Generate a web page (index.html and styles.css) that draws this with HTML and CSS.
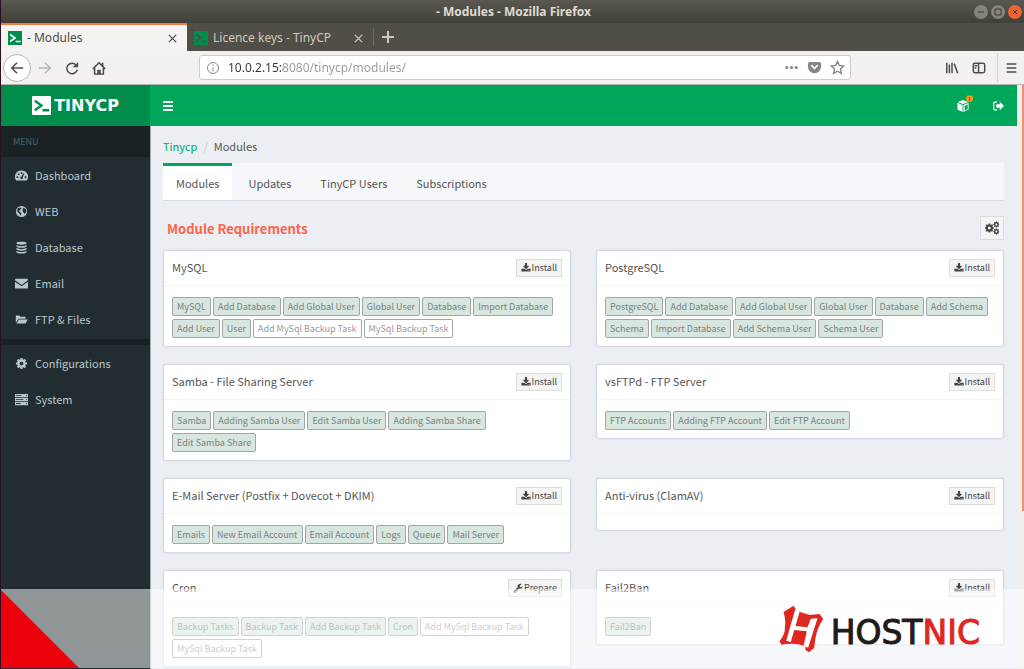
FILE: index.html
```html
<!DOCTYPE html>
<html lang="en">
<head>
    <meta charset="UTF-8">
    <meta name="viewport" content="width=device-width, initial-scale=1.0">
    <title>- Modules</title>
    <link rel="stylesheet" href="styles.css">
</head>
<body>
    <!-- Icon set -->
    <svg class="sprite" aria-hidden="true">
        <symbol id="i-install" viewBox="0 0 1792 1792"><path d="M1344 1344q0-26-19-45t-45-19-45 19-19 45 19 45 45 19 45-19 19-45zm256 0q0-26-19-45t-45-19-45 19-19 45 19 45 45 19 45-19 19-45zm128-224v320q0 40-28 68t-68 28h-1472q-40 0-68-28t-28-68v-320q0-40 28-68t68-28h465l135 136q58 56 136 56t136-56l136-136h464q40 0 68 28t28 68zm-325-569q17 41-14 70l-448 448q-18 19-45 19t-45-19l-448-448q-31-29-14-70 17-39 59-39h256v-448q0-26 19-45t45-19h256q26 0 45 19t19 45v448h256q42 0 59 39z"/></symbol>
        <symbol id="i-cog" viewBox="0 0 1792 1792"><path d="M1152 896q0-106-75-181t-181-75-181 75-75 181 75 181 181 75 181-75 75-181zm512-109v222q0 12-8 23t-20 13l-185 28q-19 54-39 91 35 50 107 138 10 12 10 25t-9 23q-27 37-99 108t-94 71q-12 0-26-9l-138-108q-44 23-91 38-16 136-29 186-7 28-36 28h-222q-14 0-24.5-8.5t-11.5-21.5l-28-184q-49-16-90-37l-141 107q-10 9-25 9-14 0-25-11-126-114-165-168-7-10-7-23 0-12 8-23 15-21 51-66.5t54-70.5q-27-50-41-99l-183-27q-13-2-21-12.5t-8-23.5v-222q0-12 8-23t19-13l186-28q14-46 39-92-40-57-107-138-10-12-10-24 0-10 9-23 26-36 98.5-107.5t94.5-71.5q13 0 26 10l138 107q44-23 91-38 16-136 29-186 7-28 36-28h222q14 0 24.5 8.5t11.5 21.5l28 184q49 16 90 37l142-107q9-9 24-9 13 0 25 10 129 119 165 170 7 8 7 22 0 12-8 23-15 21-51 66.5t-54 70.5q26 50 41 98l183 28q13 2 21 12.5t8 23.5z"/></symbol>
        <symbol id="i-wrench" viewBox="0 0 1792 1792"><path d="M448 1472q0-26-19-45t-45-19-45 19-19 45 19 45 45 19 45-19 19-45zm644-420l-682 682q-37 37-90 37-52 0-91-37l-106-108q-38-36-38-90 0-53 38-91l681-681q39 98 114.5 173.5t173.5 114.5zm634-435q0 39-23 106-47 134-164.5 217.5t-258.5 83.5q-185 0-316.5-131.5t-131.5-316.5 131.5-316.5 316.5-131.5q58 0 121.5 16.5t107.5 46.5q16 11 16 28t-16 28l-293 169v224l193 107q5-3 79-48.5t135.5-81 70.5-35.5q15 0 23.5 10t8.5 25z"/></symbol>
        <symbol id="i-terminal" viewBox="0 0 20 20"><path d="M3 5l7 5-7 5M11 15h7" fill="none" stroke-width="2.4"/></symbol>
        <symbol id="i-close" viewBox="0 0 10 10"><path d="M1 1l8 8M9 1l-8 8" fill="none" stroke="currentColor" stroke-width="1.4"/></symbol>
    </svg>

    <!-- Browser window -->
    <div class="titlebar">
        <div class="title">- Modules - Mozilla Firefox</div>
        <div class="window-buttons">
            <button class="win-btn" aria-label="Minimize"><svg viewBox="0 0 14 14"><path d="M4 7h6"/></svg></button>
            <button class="win-btn" aria-label="Maximize"><svg viewBox="0 0 14 14"><path d="M4 4h6v6H4z"/></svg></button>
            <button class="win-btn win-close" aria-label="Close"><svg viewBox="0 0 14 14"><path d="M5 5l4 4M9 5l-4 4"/></svg></button>
        </div>
    </div>

    <div class="browser-tabs">
        <div class="browser-tab active">
            <svg class="favicon"><use href="#i-terminal"/></svg>
            <span>- Modules</span>
            <button class="tab-close" aria-label="Close tab"><svg><use href="#i-close"/></svg></button>
        </div>
        <div class="browser-tab">
            <svg class="favicon"><use href="#i-terminal"/></svg>
            <span>Licence keys - TinyCP</span>
            <button class="tab-close" aria-label="Close tab"><svg><use href="#i-close"/></svg></button>
        </div>
        <button class="new-tab" aria-label="New tab"><svg viewBox="0 0 12 12"><path d="M6 0v12M0 6h12"/></svg></button>
    </div>

    <div class="toolbar">
        <div class="nav-buttons">
            <button class="tool back" aria-label="Back"><svg viewBox="0 0 16 16"><path d="M15 8H2M8 2L2 8l6 6"/></svg></button>
            <button class="tool forward" aria-label="Forward"><svg viewBox="0 0 16 16"><path d="M1 8h13M8 2l6 6-6 6"/></svg></button>
            <button class="tool" aria-label="Reload"><svg viewBox="0 0 16 16"><path d="M13 5A6 6 0 1 0 14 10"/><path class="solid" d="M15 1v6H9z"/></svg></button>
            <button class="tool" aria-label="Home"><svg viewBox="0 0 16 16"><path d="M1 9l7-7 7 7M3 8v7h10V8"/><path class="solid" d="M6 15v-5h4v5zM11 2h2v4h-2z"/></svg></button>
        </div>
        <div class="urlbar">
            <svg class="info" viewBox="0 0 14 14"><circle cx="7" cy="7" r="5.5"/><path d="M7 6.5v4M7 3.5V5"/></svg>
            <input class="url" type="text" value="10.0.2.15:8080/tinycp/modules/" aria-label="Address">
            <button class="url-btn" aria-label="Page actions"><svg viewBox="0 0 16 16"><circle cx="3" cy="8" r="1.7"/><circle cx="8" cy="8" r="1.7"/><circle cx="13" cy="8" r="1.7"/></svg></button>
            <button class="url-btn" aria-label="Save to Pocket"><svg viewBox="0 0 16 16"><path d="M3 2h10q2 0 2 2v3a7 7 0 0 1-14 0V4q0-2 2-2z"/><path d="M5 6l3 3 3-3" fill="none" stroke="#fff" stroke-width="1.8" stroke-linecap="round"/></svg></button>
            <button class="url-btn" aria-label="Bookmark"><svg viewBox="0 0 16 16"><path d="M8 1.5l2 4.3 4.7.6-3.5 3.2.9 4.7L8 12l-4.1 2.3.9-4.7-3.5-3.2L6 5.8z" fill="none" stroke="currentColor" stroke-width="1.5"/></svg></button>
        </div>
        <div class="tools-right">
            <button class="tool" aria-label="Library"><svg viewBox="0 0 16 16"><path d="M2 2v12M5 4v10M8 2v12M10.5 3l4 11"/></svg></button>
            <button class="tool" aria-label="Sidebars"><svg viewBox="0 0 16 16"><rect x="1.5" y="2.5" width="13" height="11" rx="2"/><path d="M7.5 3v10"/><path d="M3 5.5h3M3 8h2"/></svg></button>
            <button class="tool menu" aria-label="Menu"><svg viewBox="0 0 16 16"><path d="M3 3.5h11M3 8h11M3 12.5h11"/></svg></button>
        </div>
    </div>

    <!-- TinyCP page -->
    <div class="viewport">
        <div class="page">
            <header class="header">
                <a class="logo" href="#">
                    <svg class="logo-icon"><use href="#i-terminal"/></svg>
                    <span>TINYCP</span>
                </a>
                <nav class="topnav">
                    <button class="top-btn" aria-label="Toggle navigation"><svg viewBox="0 0 12 12"><path d="M1 1h10v2H1zM1 5h10v2H1zM1 9h10v2H1z"/></svg></button>
                    <div class="top-right">
                        <a class="top-btn" href="#" aria-label="Updates available">
                            <svg viewBox="0 0 14 14"><path d="M7 0l6 2.2-6 2.6-6-2.6zM.5 3.2l6 2.6V14l-6-3z"/><path fill-rule="evenodd" d="M13.5 3.2l-6 2.6V14l6-3zM12.5 5v5.5l-3.5 2V7z"/></svg>
                            <span class="badge">i</span>
                        </a>
                        <a class="top-btn" href="#" aria-label="Sign out"><svg viewBox="0 0 14 14"><path d="M6 2.5H3.5Q2 2.5 2 4v6q0 1.5 1.5 1.5H6" fill="none" stroke="#fff" stroke-width="1.3"/><path d="M5 5h4V2l5 5-5 5V9H5z"/></svg></a>
                    </div>
                </nav>
            </header>

            <div class="layout">
                <aside class="sidebar">
                    <div class="menu-header">MENU</div>
                    <ul class="menu-list">
                        <li><a href="#"><svg viewBox="0 0 16 14"><path fill-rule="evenodd" d="M8 1a8 7.5 0 0 0-6.5 12h13A8 7.5 0 0 0 8 1zM7 3h2v2H7zM3.5 4.5h2v2h-2zM2 8h2v2H2zM12 8h2v2h-2zM10 4.5l1.5.4-2 4.2q1 2-1.500 2.300-2.200-.5-1.300-2.600l1.500-.5z"/></svg><span>Dashboard</span></a></li>
                        <li><a href="#"><svg viewBox="0 0 14 14"><path fill-rule="evenodd" d="M7 1a6 6 0 1 0 0 12A6 6 0 0 0 7 1zM3 3.5l3-.9 1 1.2-2 1.6-.4 1.8 2.3 1.4-1 3-1.7-3-1.9-2zM9 3l2.8 1.6.4 2.8-1.6 2.4-1.7-2L8 5.5z"/></svg><span>WEB</span></a></li>
                        <li><a href="#"><svg viewBox="0 0 14 14"><path d="M1.5 2.5c0-2.1 11-2.1 11 0s-11 2.1-11 0zM1.5 4.5q5.5 2.5 11 0v1.3q-1 1.5-5.5 1.5T1.5 5.8zM1.5 7.6q5.5 2.5 11 0v1.3q-1 1.5-5.5 1.5T1.5 8.9zM1.5 10.7q5.5 2.5 11 0V12q-1 1.5-5.5 1.5T1.5 12z"/></svg><span>Database</span></a></li>
                        <li><a href="#"><svg viewBox="0 0 14 14"><path d="M1 2h12q1 0 1 1.5l-7 5-7-5Q0 2 1 2zM0 5l7 5 7-5v6.5q0 1-1 1H1q-1 0-1-1z"/></svg><span>Email</span></a></li>
                        <li><a href="#"><svg viewBox="0 0 16 14"><path d="M1 2h4.5l1 1.5H12q1 0 1 1V6H4.5L1 11zM5 7h10.8L13 12H1.8z"/></svg><span>FTP &amp; Files</span></a></li>
                    </ul>
                    <ul class="menu-list second">
                        <li><a href="#"><svg><use href="#i-cog"/></svg><span>Configurations</span></a></li>
                        <li><a href="#"><svg viewBox="0 0 14 14"><path fill-rule="evenodd" d="M0 1h14v3.500H0zM0 5.300h14v3.500H0zM0 9.600h14v3.500H0zM1 2.300v1h6v-1zM1 6.600v1h8v-1zM1 10.900v1h5v-1zM12 2.300v1h1v-1zM12 6.600v1h1v-1zM12 10.900v1h1v-1z"/></svg><span>System</span></a></li>
                    </ul>
                </aside>

                <main class="content">
                    <div class="breadcrumb"><a href="#">Tinycp</a><span class="sep">/</span><span>Modules</span></div>

                    <nav class="tabs">
                        <a class="tab active" href="#">Modules</a>
                        <a class="tab" href="#">Updates</a>
                        <a class="tab" href="#">TinyCP Users</a>
                        <a class="tab" href="#">Subscriptions</a>
                    </nav>

                    <div class="section-head">
                        <h1>Module Requirements</h1>
                        <button class="btn btn-settings" aria-label="Settings"><svg viewBox="0 0 16 14"><use href="#i-cog" x="-1" y="1" width="12" height="12"/><use href="#i-cog" x="9" y="-1" width="8" height="8"/><use href="#i-cog" x="9" y="7" width="8" height="8"/></svg></button>
                    </div>

                    <div class="modules">
                        <section class="card">
                            <div class="card-head"><h2>MySQL</h2><button class="btn"><svg><use href="#i-install"/></svg>Install</button></div>
                            <div class="card-body">
                                <span class="tag">MySQL</span>
                                <span class="tag">Add Database</span>
                                <span class="tag">Add Global User</span>
                                <span class="tag">Global User</span>
                                <span class="tag">Database</span>
                                <span class="tag">Import Database</span>
                                <span class="tag">Add User</span>
                                <span class="tag">User</span>
                                <span class="tag off">Add MySql Backup Task</span>
                                <span class="tag off">MySql Backup Task</span>
                            </div>
                        </section>

                        <section class="card">
                            <div class="card-head"><h2>PostgreSQL</h2><button class="btn"><svg><use href="#i-install"/></svg>Install</button></div>
                            <div class="card-body">
                                <span class="tag">PostgreSQL</span>
                                <span class="tag">Add Database</span>
                                <span class="tag">Add Global User</span>
                                <span class="tag">Global User</span>
                                <span class="tag">Database</span>
                                <span class="tag">Add Schema</span>
                                <span class="tag">Schema</span>
                                <span class="tag">Import Database</span>
                                <span class="tag">Add Schema User</span>
                                <span class="tag">Schema User</span>
                            </div>
                        </section>

                        <section class="card">
                            <div class="card-head"><h2>Samba - File Sharing Server</h2><button class="btn"><svg><use href="#i-install"/></svg>Install</button></div>
                            <div class="card-body">
                                <span class="tag">Samba</span>
                                <span class="tag">Adding Samba User</span>
                                <span class="tag">Edit Samba User</span>
                                <span class="tag">Adding Samba Share</span>
                                <span class="tag">Edit Samba Share</span>
                            </div>
                        </section>

                        <section class="card">
                            <div class="card-head"><h2>vsFTPd - FTP Server</h2><button class="btn"><svg><use href="#i-install"/></svg>Install</button></div>
                            <div class="card-body">
                                <span class="tag">FTP Accounts</span>
                                <span class="tag">Adding FTP Account</span>
                                <span class="tag">Edit FTP Account</span>
                            </div>
                        </section>

                        <section class="card">
                            <div class="card-head"><h2>E-Mail Server (Postfix + Dovecot + DKIM)</h2><button class="btn"><svg><use href="#i-install"/></svg>Install</button></div>
                            <div class="card-body">
                                <span class="tag">Emails</span>
                                <span class="tag">New Email Account</span>
                                <span class="tag">Email Account</span>
                                <span class="tag">Logs</span>
                                <span class="tag">Queue</span>
                                <span class="tag">Mail Server</span>
                            </div>
                        </section>

                        <section class="card">
                            <div class="card-head"><h2>Anti-virus (ClamAV)</h2><button class="btn"><svg><use href="#i-install"/></svg>Install</button></div>
                            <div class="card-body"></div>
                        </section>

                        <section class="card">
                            <div class="card-head"><h2>Cron</h2><button class="btn"><svg><use href="#i-wrench"/></svg>Prepare</button></div>
                            <div class="card-body">
                                <span class="tag">Backup Tasks</span>
                                <span class="tag">Backup Task</span>
                                <span class="tag">Add Backup Task</span>
                                <span class="tag">Cron</span>
                                <span class="tag off">Add MySql Backup Task</span>
                                <span class="tag off">MySql Backup Task</span>
                            </div>
                        </section>

                        <section class="card">
                            <div class="card-head"><h2>Fail2Ban</h2><button class="btn"><svg><use href="#i-install"/></svg>Install</button></div>
                            <div class="card-body">
                                <span class="tag">Fail2Ban</span>
                            </div>
                        </section>
                    </div>
                </main>
            </div>
        </div>
        <div class="scrollbar"><div class="thumb"></div></div>
    </div>

    <!-- Hostnic banner -->
    <div class="banner">
        <div class="corner"></div>
        <div class="hostnic">
            <svg viewBox="10 10 140 150">
                <path d="M26 34L56 15l6 9-2 10 16 0 28 9 30-3 11 14Q126 84 122 112l-4 30-16 13-10-7v-10Q70 126 34 130l-14 2-6-10Q32 100 30 80 34 60 26 34z"/>
                <path d="M60 30l14 5-12 41 36 4 10-26 20-1-28 88-14-5 10-44-38-4-10 36-14-4z" fill="#fff"/>
            </svg>
            <span>HOST<b>NIC</b></span>
        </div>
    </div>
</body>
</html>
```
FILE: styles.css
```css
* {
    box-sizing: border-box;
}

body {
    display: flex;
    flex-direction: column;
    position: relative;
    height: 100vh;
    margin: 0;
    border-left: 1px solid #2b1020;
    overflow: hidden;
    background: #ebeff4;
    color: #555;
    font-family: "Noto Sans CJK SC", "Noto Sans", sans-serif;
    font-size: 11px;
    line-height: 16px;
}

button {
    padding: 0;
    border: none;
    background: none;
    color: inherit;
    font: inherit;
    cursor: pointer;
}

a {
    color: inherit;
    text-decoration: none;
}

svg {
    display: block;
    flex: none;
    fill: currentColor;
}

.sprite {
    position: absolute;
    width: 0;
    height: 0;
}

/* Browser window */
.titlebar,
.browser-tabs,
.toolbar {
    display: flex;
    flex: none;
    align-items: center;
    font-family: "Noto Sans", sans-serif;
}

.titlebar {
    height: 23px;
    background: linear-gradient(#5a5850, #403f3a);
    color: #dfdbd2;
}

.title {
    flex: 1;
    padding-left: 52px;
    font-size: 12px;
    font-weight: bold;
    text-align: center;
}

.window-buttons {
    display: flex;
    gap: 3px;
    padding-right: 2px;
}

.win-btn {
    width: 14px;
    height: 14px;
    border-radius: 50%;
    background: #85837c;
    color: #3c3b37;
}

.win-btn path {
    fill: none;
    stroke: currentColor;
}

.win-close {
    background: #ee6234;
}

.browser-tabs {
    height: 28px;
    background: #504e47;
    color: #cfcabf;
    font-size: 12px;
}

.browser-tab {
    display: flex;
    align-items: center;
    width: 186px;
    height: 28px;
    padding: 0 10px 0 7px;
    border-top: 2px solid transparent;
}

.browser-tab.active {
    border-top-color: #f07746;
    background: #f4f3f2;
    color: #4c4c4c;
}

.favicon {
    width: 14px;
    height: 14px;
    margin-right: 5px;
    background: #008d4c;
    stroke: #fff;
}

.browser-tab:not(.active) .favicon {
    stroke: #504e47;
}

.tab-close {
    width: 9px;
    height: 9px;
    margin-left: auto;
}

.tab-close svg {
    width: 9px;
    height: 9px;
}

.new-tab {
    padding: 3px 8px;
    border-left: 1px solid #6d6b64;
}

.new-tab svg {
    width: 12px;
    height: 12px;
    stroke: currentColor;
    stroke-width: 2;
}

.toolbar {
    justify-content: space-between;
    height: 34px;
    border-bottom: 1px solid #b5b4b2;
    background: #f2f1f0;
    color: #4c4c4c;
}

.nav-buttons,
.tools-right {
    display: flex;
    align-items: center;
}

.nav-buttons {
    width: 198px;
    padding-left: 2px;
}

.tool {
    display: flex;
    align-items: center;
    justify-content: center;
    width: 27px;
    height: 28px;
}

.tool svg {
    width: 14px;
    height: 14px;
    fill: none;
    stroke: currentColor;
    stroke-width: 1.7;
}

.tool .solid {
    fill: currentColor;
    stroke: none;
}

.back {
    width: 28px;
    border: 1px solid #b8b6b3;
    border-radius: 50%;
    background: #fff;
}

.forward {
    color: #b5b4b2;
}

.urlbar {
    display: flex;
    flex: 1;
    align-items: center;
    gap: 8px;
    max-width: 652px;
    height: 25px;
    padding: 0 5px 0 6px;
    border: 1px solid #ccc;
    border-radius: 3px;
    background: #fff;
    color: #858585;
}

.info {
    width: 14px;
    height: 14px;
    fill: none;
    stroke: currentColor;
}

/* host part is darker than the path */
.url {
    flex: 1;
    min-width: 0;
    padding: 0;
    border: none;
    outline: none;
    background: linear-gradient(to right, #333 55px, #999 55px);
    -webkit-background-clip: text;
    background-clip: text;
    color: transparent;
    font-family: "Noto Sans", sans-serif;
    font-size: 12px;
}

.url-btn svg {
    width: 15px;
    height: 15px;
}

.tools-right {
    margin-left: auto;
}

.menu {
    margin-left: 5px;
    border-left: 1px solid #d5d3d1;
}

/* Page */
.viewport {
    display: flex;
    flex: 1;
    min-height: 0;
}

.page {
    display: flex;
    flex: 1;
    flex-direction: column;
    min-width: 0;
}

.scrollbar {
    width: 7px;
    padding-left: 5px;
    background: #f1efee;
}

.thumb {
    height: 73%;
    background: #ee9374;
}

.header {
    display: flex;
    flex: none;
    height: 41px;
    background: #00a65a;
    color: #fff;
}

.logo {
    display: flex;
    align-items: center;
    justify-content: center;
    gap: 3px;
    width: 149px;
    background: #008d4c;
    font-family: "DejaVu Sans", sans-serif;
    font-size: 16px;
    font-weight: bold;
}

.logo-icon {
    width: 19px;
    height: 19px;
    border-radius: 1px;
    background: #fff;
    stroke: #008d4c;
}

.topnav {
    display: flex;
    flex: 1;
    align-items: center;
    justify-content: space-between;
    padding: 0 13px 0 12px;
}

.top-right {
    display: flex;
    gap: 23px;
}

.top-btn {
    position: relative;
}

.top-btn svg {
    width: 12px;
    height: 12px;
}

.badge {
    position: absolute;
    top: -5px;
    right: -4px;
    width: 7px;
    height: 7px;
    border-radius: 50%;
    background: #f39c12;
    color: #7a4b00;
    font-size: 6px;
    font-weight: bold;
    line-height: 7px;
    text-align: center;
}

.layout {
    display: flex;
    flex: 1;
    min-height: 0;
}

.sidebar {
    flex: none;
    width: 150px;
    border-right: 1px solid #a5acb1;
    background: #222d32;
    color: #b8c7ce;
}

.menu-header {
    padding: 8px 12px 7px;
    background: #1a2226;
    color: #4b646f;
    font-size: 9px;
}

.menu-list {
    margin: 0;
    padding: 0 0 2px;
    list-style: none;
}

.menu-list.second {
    border-top: 6px solid #1a2226;
}

.menu-list a {
    display: flex;
    align-items: center;
    gap: 7px;
    height: 36px;
    padding-left: 14px;
}

.menu-list svg {
    width: 13px;
    height: 13px;
}

.content {
    flex: 1;
    min-width: 0;
    padding: 12px 13px 0 12px;
}

.breadcrumb {
    display: flex;
    gap: 6px;
}

.breadcrumb a {
    color: #00a65a;
}

.sep {
    color: #ccc;
}

.tabs {
    display: flex;
    gap: 3px;
    margin-top: 9px;
    border-bottom: 1px solid #d8dce3;
    background: #f5f7fa;
}

.tab {
    height: 37px;
    padding: 10px 13px 0;
    border-top: 3px solid transparent;
    line-height: 14px;
}

.tab.active {
    border-top-color: #00a65a;
    background: #fff;
}

.section-head {
    display: flex;
    align-items: center;
    justify-content: space-between;
    padding: 15px 0 11px 4px;
}

h1 {
    margin: 0;
    padding-top: 2px;
    color: tomato;
    font-size: 13px;
    font-weight: bold;
}

h2 {
    margin: 0;
    padding-bottom: 2px;
    font-size: 11px;
    font-weight: normal;
}

.btn {
    display: flex;
    align-items: center;
    gap: 1px;
    height: 18px;
    padding: 0 4px;
    border: 1px solid #ddd;
    background: #f4f4f4;
    color: #444;
    font-size: 9px;
}

.btn svg {
    width: 10px;
    height: 10px;
}

.btn-settings {
    height: 24px;
}

.btn-settings svg {
    width: 14px;
    height: 14px;
}

.modules {
    display: grid;
    grid-template-columns: 1fr 1fr;
    align-items: start;
    gap: 19px 27px;
    padding: 0 1px;
}

.card {
    border-radius: 2px;
    background: #fff;
    box-shadow: 0 0 2px 1px rgba(130, 145, 170, 0.3);
}

.card-head {
    display: flex;
    align-items: center;
    justify-content: space-between;
    height: 35px;
    padding: 0 8px;
    border-bottom: 1px solid #f4f4f4;
}

.card-body {
    display: flex;
    flex-wrap: wrap;
    column-gap: 2px;
    padding: 9px 8px 7px;
}

.tag {
    height: 19px;
    margin: 2px 0 1px;
    padding: 0 4px;
    border: 1px solid #a0a6a3;
    border-radius: 2px;
    background: #d7e6df;
    color: #7b817e;
    font-size: 9px;
    line-height: 17px;
}

.tag.off {
    background: #fff;
    color: #999;
}

/* Banner over the bottom of the page */
.banner {
    display: flex;
    position: absolute;
    right: 0;
    bottom: 1px;
    left: -1px;
    align-items: center;
    justify-content: space-between;
    height: 79px;
    padding-right: 44px;
    background: rgba(255, 255, 255, 0.5);
}

.corner {
    width: 79px;
    height: 79px;
    background: #eb000c;
    clip-path: polygon(0 0, 100% 100%, 0 100%);
}

.hostnic {
    display: flex;
    align-items: center;
    gap: 6px;
    color: #221a18;
    font-family: "DejaVu Sans", sans-serif;
    font-size: 33px;
    line-height: 40px;
    -webkit-text-stroke: 1px currentColor;
}

.hostnic svg {
    width: 47px;
    height: 50px;
    fill: #df261f;
}

.hostnic span {
    padding-top: 8px;
}

.hostnic b {
    color: #df261f;
    font-weight: normal;
}
```
